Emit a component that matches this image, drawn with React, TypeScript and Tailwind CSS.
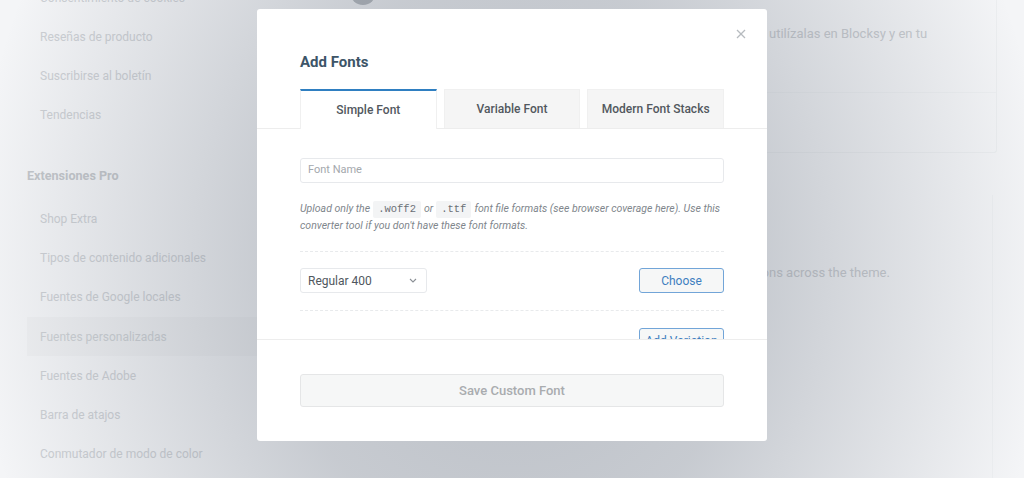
import React from 'react';

const topItems = ['Consentimiento de cookies', 'Reseñas de producto', 'Suscribirse al boletín', 'Tendencias'];
const proItems = [
  'Shop Extra',
  'Tipos de contenido adicionales',
  'Fuentes de Google locales',
  'Fuentes personalizadas',
  'Fuentes de Adobe',
  'Barra de atajos',
  'Conmutador de modo de color',
];

const Sidebar = () => (
  <aside className="w-[262px] shrink-0 pl-[27px] -mt-[22px]">
    {topItems.map((item) => (
      <div key={item} className="h-[39px] flex items-center pl-[13px] text-[12px] text-[#cdd0d4]">
        {item}
      </div>
    ))}
    <div className="mt-[32px] mb-[13px] h-[20px] flex items-center text-[12.6px] font-bold text-[#c3c6ca]">
      Extensiones Pro
    </div>
    {proItems.map((item) => (
      <div
        key={item}
        className={`h-[39.3px] flex items-center pl-[13px] text-[12px] text-[#cdd0d4] ${
          item === 'Fuentes personalizadas' ? 'bg-[rgba(0,0,0,0.018)]' : ''
        }`}
      >
        {item}
      </div>
    ))}
  </aside>
);

const Main = () => (
  <main className="flex-1 pr-[27px]">
    <div className="h-0 pl-[88px]">
      <div className="w-[26px] h-[26px] rounded-full bg-[#b5b9be] -translate-y-[21px]" />
    </div>
    <div className="h-[153px] border-r border-b border-[#eceef0] rounded-br-[3px] flex flex-col">
      <div className="h-[93px] border-b border-[#eef0f2] flex pt-[24px] text-[13px] text-[#c8cbcf]">
        <span className="w-[507px] shrink-0 text-right pr-[4px]">Sube tus fuentes personalizadas y</span>
        <span>utilízalas en Blocksy y en tu</span>
      </div>
      <div className="flex-1" />
    </div>
    <div className="mt-[42px] h-[300px] border-r border-[#eef0f2] mr-[4px] flex text-[13px] text-[#c8cbcf] pt-[68px]">
      <span className="w-[507px] shrink-0 text-right">Use them for your font selectio</span>
      <span>ns across the theme.</span>
    </div>
  </main>
);

const CodeChip = ({ children }: { children: React.ReactNode }) => (
  <code className="inline-block align-middle mx-[3px] px-[5px] h-[17px] leading-[17px] rounded-[2px] bg-[#f3f4f5] not-italic text-[10.5px] text-[#6b7075] font-['Liberation_Mono',monospace]">
    {children}
  </code>
);

const Modal = () => (
  <div className="absolute left-[257px] top-[9px] w-[510px] h-[432px] bg-white rounded-[3px] flex flex-col overflow-hidden">
    <button className="absolute right-[21px] top-[20px] w-[10px] h-[10px] text-[#b7bbbf]">
      <svg viewBox="0 0 10 10" width="10" height="10" stroke="currentColor" strokeWidth="1.3">
        <line x1="1" y1="1" x2="9" y2="9" />
        <line x1="9" y1="1" x2="1" y2="9" />
      </svg>
    </button>
    <div className="pt-[43px] px-[43px] border-b border-[#ededed]">
      <h2 className="h-[20px] leading-[20px] text-[15px] font-bold text-[#3d5568]">Add Fonts</h2>
      <div className="mt-[17px] flex gap-[7px] -mb-px">
        <div className="w-[137px] h-[40px] border-t-2 border-t-[#2f7fc1] border-x border-x-[#f0f0f0] bg-white flex items-center justify-center text-[12px] font-medium text-[#52585e]">
          Simple Font
        </div>
        <div className="w-[137px] h-[39px] bg-[#f5f5f5] border border-[#f0f0f0] border-b-0 flex items-center justify-center text-[12px] font-medium text-[#52585e]">
          Variable Font
        </div>
        <div className="w-[137px] h-[39px] bg-[#f5f5f5] border border-[#f0f0f0] border-b-0 flex items-center justify-center text-[12px] font-medium text-[#52585e]">
          Modern Font Stacks
        </div>
      </div>
    </div>

    <div className="h-[210px] px-[43px] pt-[29px] overflow-hidden">
      <div className="h-[25px] border border-[#e7e9ec] rounded-[3px] flex items-center px-[7px] text-[11px] text-[#a4a8ad]">
        Font Name
      </div>
      <p className="mt-[18px] text-[10.5px] leading-[16px] italic text-[#80868c]">
        Upload only the<CodeChip>.woff2</CodeChip>or<CodeChip>.ttf</CodeChip>font file formats (see browser coverage here). Use this converter tool if you don't have these font formats.
      </p>
      <div className="mt-[17px] border-t border-dashed border-[#e8eaec]" />
      <div className="mt-[16px] flex items-center justify-between">
        <div className="w-[127px] h-[25px] border border-[#e7e9ec] rounded-[3px] flex items-center justify-between pl-[7px] pr-[9px] text-[12px] text-[#50575e]">
          Regular 400
          <svg width="8" height="5" viewBox="0 0 8 5" fill="none" stroke="#8b9096" strokeWidth="1.1">
            <path d="M1 1l3 3 3-3" />
          </svg>
        </div>
        <button className="w-[85px] h-[25px] border border-[#72a5d8] rounded-[3px] bg-[#f6f7f7] text-[12px] text-[#3f7fc0]">
          Choose
        </button>
      </div>
      <div className="mt-[17px] border-t border-dashed border-[#e8eaec]" />
      <div className="mt-[17px] flex justify-end">
        <button className="w-[85px] h-[25px] border border-[#72a5d8] rounded-[3px] bg-[#f6f7f7] text-[12px] text-[#3f7fc0] whitespace-nowrap">
          Add Variation
        </button>
      </div>
    </div>

    <div className="border-t border-[#ededed] px-[43px] pt-[34px] pb-[34px]">
      <button className="w-full h-[33px] bg-[#f6f7f7] border border-[#e5e6e7] rounded-[3px] text-[13px] font-medium text-[#a9acaf]">
        Save Custom Font
      </button>
    </div>
  </div>
);

export default function App() {
  return (
    <div className="relative w-[1024px] h-[478px] overflow-hidden bg-[#f4f5f7] font-['Roboto',sans-serif]">
      <div className="flex h-full">
        <Sidebar />
        <Main />
      </div>
      <div className="absolute inset-0 bg-[radial-gradient(540px_640px_at_512px_260px,rgba(95,105,120,0.4)_0%,rgba(95,105,120,0.3)_45%,rgba(95,105,120,0)_100%)]" />
      <Modal />
    </div>
  );
}
